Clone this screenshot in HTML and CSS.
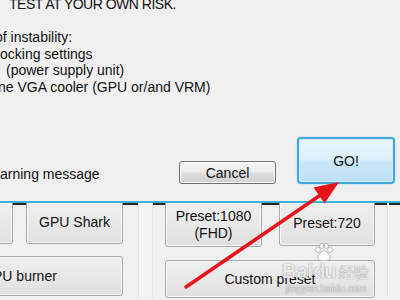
FILE: index.html
```
<!DOCTYPE html>
<html>
<head>
<meta charset="utf-8">
<link rel="stylesheet" href="styles.css">
</head>
<body>
<div class="dialog">
  <div class="msg">
    <div class="line l-top">TEST AT YOUR OWN RISK.</div>
    <div class="line">&nbsp;</div>
    <div class="line l-cut5">of instability:</div>
    <div class="line">ocking settings</div>
    <div class="line l-in6">(power supply unit)</div>
    <div class="line l-cut2">ne VGA cooler (GPU or/and VRM)</div>
  </div>
  <div class="actions">
    <div class="label">arning message</div>
    <button class="btn cancel">Cancel</button>
    <button class="btn go">GO!</button>
  </div>
</div>
<div class="panel">
  <div class="group left">
    <div class="row">
      <button class="pbtn w97 h43"></button>
      <button class="pbtn w97 h43">GPU Shark</button>
    </div>
    <button class="pbtn wide h40">GPU burner</button>
  </div>
  <div class="sep"></div>
  <div class="group right">
    <div class="row r2">
      <button class="pbtn w97 h46 two">Preset:1080<br>(FHD)</button>
      <button class="pbtn w96 h45">Preset:720</button>
    </div>
    <button class="pbtn custom">Custom preset</button>
  </div>
  <div class="edge"></div>
</div>
<div class="watermark">
  <div class="wm-logo">
    <span class="wm-bai">Bai</span>
    <span class="wm-du"><svg class="paw" width="20" height="18" viewBox="0 0 26 24"><ellipse cx="5" cy="9" rx="3" ry="3.8"/><ellipse cx="10" cy="3.8" rx="2.8" ry="3.4"/><ellipse cx="16" cy="3.8" rx="2.8" ry="3.4"/><ellipse cx="21" cy="9" rx="3" ry="3.8"/><path d="M13 10.5c-4 0-8 5.5-8 9.5 0 3 3 3.8 8 3.8s8-0.8 8-3.8c0-4-4-9.5-8-9.5z"/></svg>du</span>
    <span class="cn">经验</span>
  </div>
  <div class="wm-url">jingyan.baidu.com</div>
</div>
<svg class="arrow" width="400" height="300" viewBox="0 0 400 300">
  <line x1="186" y1="287" x2="322" y2="194" stroke="#e8121b" stroke-width="3.5" stroke-linecap="round"/>
  <polygon points="339,182 324.5,203.5 313.5,187.5" fill="#e8121b"/>
</svg>
</body>
</html>
```
FILE: styles.css
```
html, body {
  margin: 0;
  padding: 0;
  width: 400px;
  height: 300px;
  overflow: hidden;
  background: #f0f0f0;
  font-family: "Liberation Sans", Arial, sans-serif;
  font-size: 14px;
  color: #111;
}
.dialog {
  height: 201px;
  overflow: hidden;
}
.msg {
  margin-top: -4px;
  line-height: 16.5px;
  white-space: nowrap;
}
.l-top { padding-left: 9px; letter-spacing: -0.5px; }
.l-cut5 { margin-left: -5px; }
.l-cut2 { margin-left: -2px; }
.l-in6 { padding-left: 6px; }
.actions {
  display: flex;
  align-items: flex-end;
  margin-top: 42px;
  padding-right: 5px;
}
.label {
  flex: 1;
  line-height: 16.5px;
  margin-bottom: 1.5px;
  white-space: nowrap;
}
.btn {
  font-family: "Liberation Sans", Arial, sans-serif;
  font-size: 14px;
  color: #111;
  padding: 0;
  box-sizing: border-box;
}
.cancel {
  width: 97px;
  height: 23px;
  border: 1px solid #707070;
  border-radius: 3px;
  background: linear-gradient(#f6f6f6 0%, #ececec 48%, #dedede 52%, #d2d2d2 100%);
  box-shadow: inset 0 0 0 1px #fbfbfb;
  margin-right: 21px;
}
.go {
  width: 98px;
  height: 47px;
  border: 2px solid #45a6dc;
  border-radius: 4px;
  background: linear-gradient(#eaf6fd 0%, #dcf0fb 48%, #c8e7f8 52%, #bde1f5 100%);
  box-shadow: inset 0 0 0 1px #cfeefd, 0 0 2px #8fd0f0;
  padding-top: 1px;
}
.panel {
  position: relative;
  height: 95px;
  border-top: 2px solid #3fb2d8;
  box-shadow: inset 0 2px 0 #1d2b31;
  overflow: hidden;
  display: flex;
}
.group {
  display: flex;
  flex-direction: column;
}
.left {
  margin-left: -84px;
  width: 207px;
  gap: 12px;
}
.row {
  display: flex;
  gap: 13px;
}
.r2 { gap: 17px; align-items: flex-start; }
.pbtn {
  font-family: "Liberation Sans", Arial, sans-serif;
  font-size: 14px;
  color: #111;
  box-sizing: border-box;
  padding: 0;
  border: 1px solid #a9a9a9;
  border-radius: 3px;
  background: linear-gradient(#efefef 0%, #e8e8e8 50%, #e0e0e0 100%);
  box-shadow: inset 0 0 0 1px #f6f6f6;
  margin-top: -2px;
  line-height: 17px;
}
.w97 { width: 97px; }
.w96 { width: 96px; }
.h43 { height: 43px; }
.h46 { height: 46px; }
.h45 { height: 45px; }
.h40 { height: 40px; margin-top: 0; }
.wide { width: 207px; }
.two { padding-top: 1px; }
.sep {
  width: 13px;
  margin-left: 15px;
  margin-right: 12px;
  border-left: 1px solid #e4e4e4;
  border-right: 1px solid #e4e4e4;
  background: #f5f5f5;
}
.right {
  width: 210px;
  gap: 13px;
}
.custom {
  width: 210px;
  height: 38px;
  margin-top: 0;
}
.edge {
  margin-left: 12px;
  width: 1px;
  background: #fbfbfb;
  border-left: 1px solid #e2e2e2;
}
.watermark {
  position: absolute;
  left: 282px;
  top: 245px;
  width: 95px;
  color: rgba(255, 255, 255, 0.85);
  text-shadow: 0 0 1px rgba(80, 80, 80, 0.6), 0 0 1px rgba(80, 80, 80, 0.4);
  pointer-events: none;
}
.wm-logo {
  display: flex;
  align-items: flex-end;
  font-family: "Liberation Sans", Arial, sans-serif;
  font-weight: bold;
  font-size: 20px;
  line-height: 20px;
  height: 36px;
}
.wm-du {
  display: flex;
  flex-direction: column;
  align-items: center;
  letter-spacing: -1px;
}
.paw {
  fill: rgba(255, 255, 255, 0.85);
  stroke: rgba(90, 90, 90, 0.5);
  stroke-width: 1;
}
.cn {
  margin-left: 3px;
  font-family: "Noto Sans CJK SC", sans-serif;
  font-weight: normal;
  font-size: 15px;
  line-height: 18px;
}
.wm-url {
  font-size: 10px;
  line-height: 12px;
  margin-left: 4px;
  margin-top: 2px;
}
.arrow {
  position: absolute;
  left: 0;
  top: 0;
  pointer-events: none;
}
```
